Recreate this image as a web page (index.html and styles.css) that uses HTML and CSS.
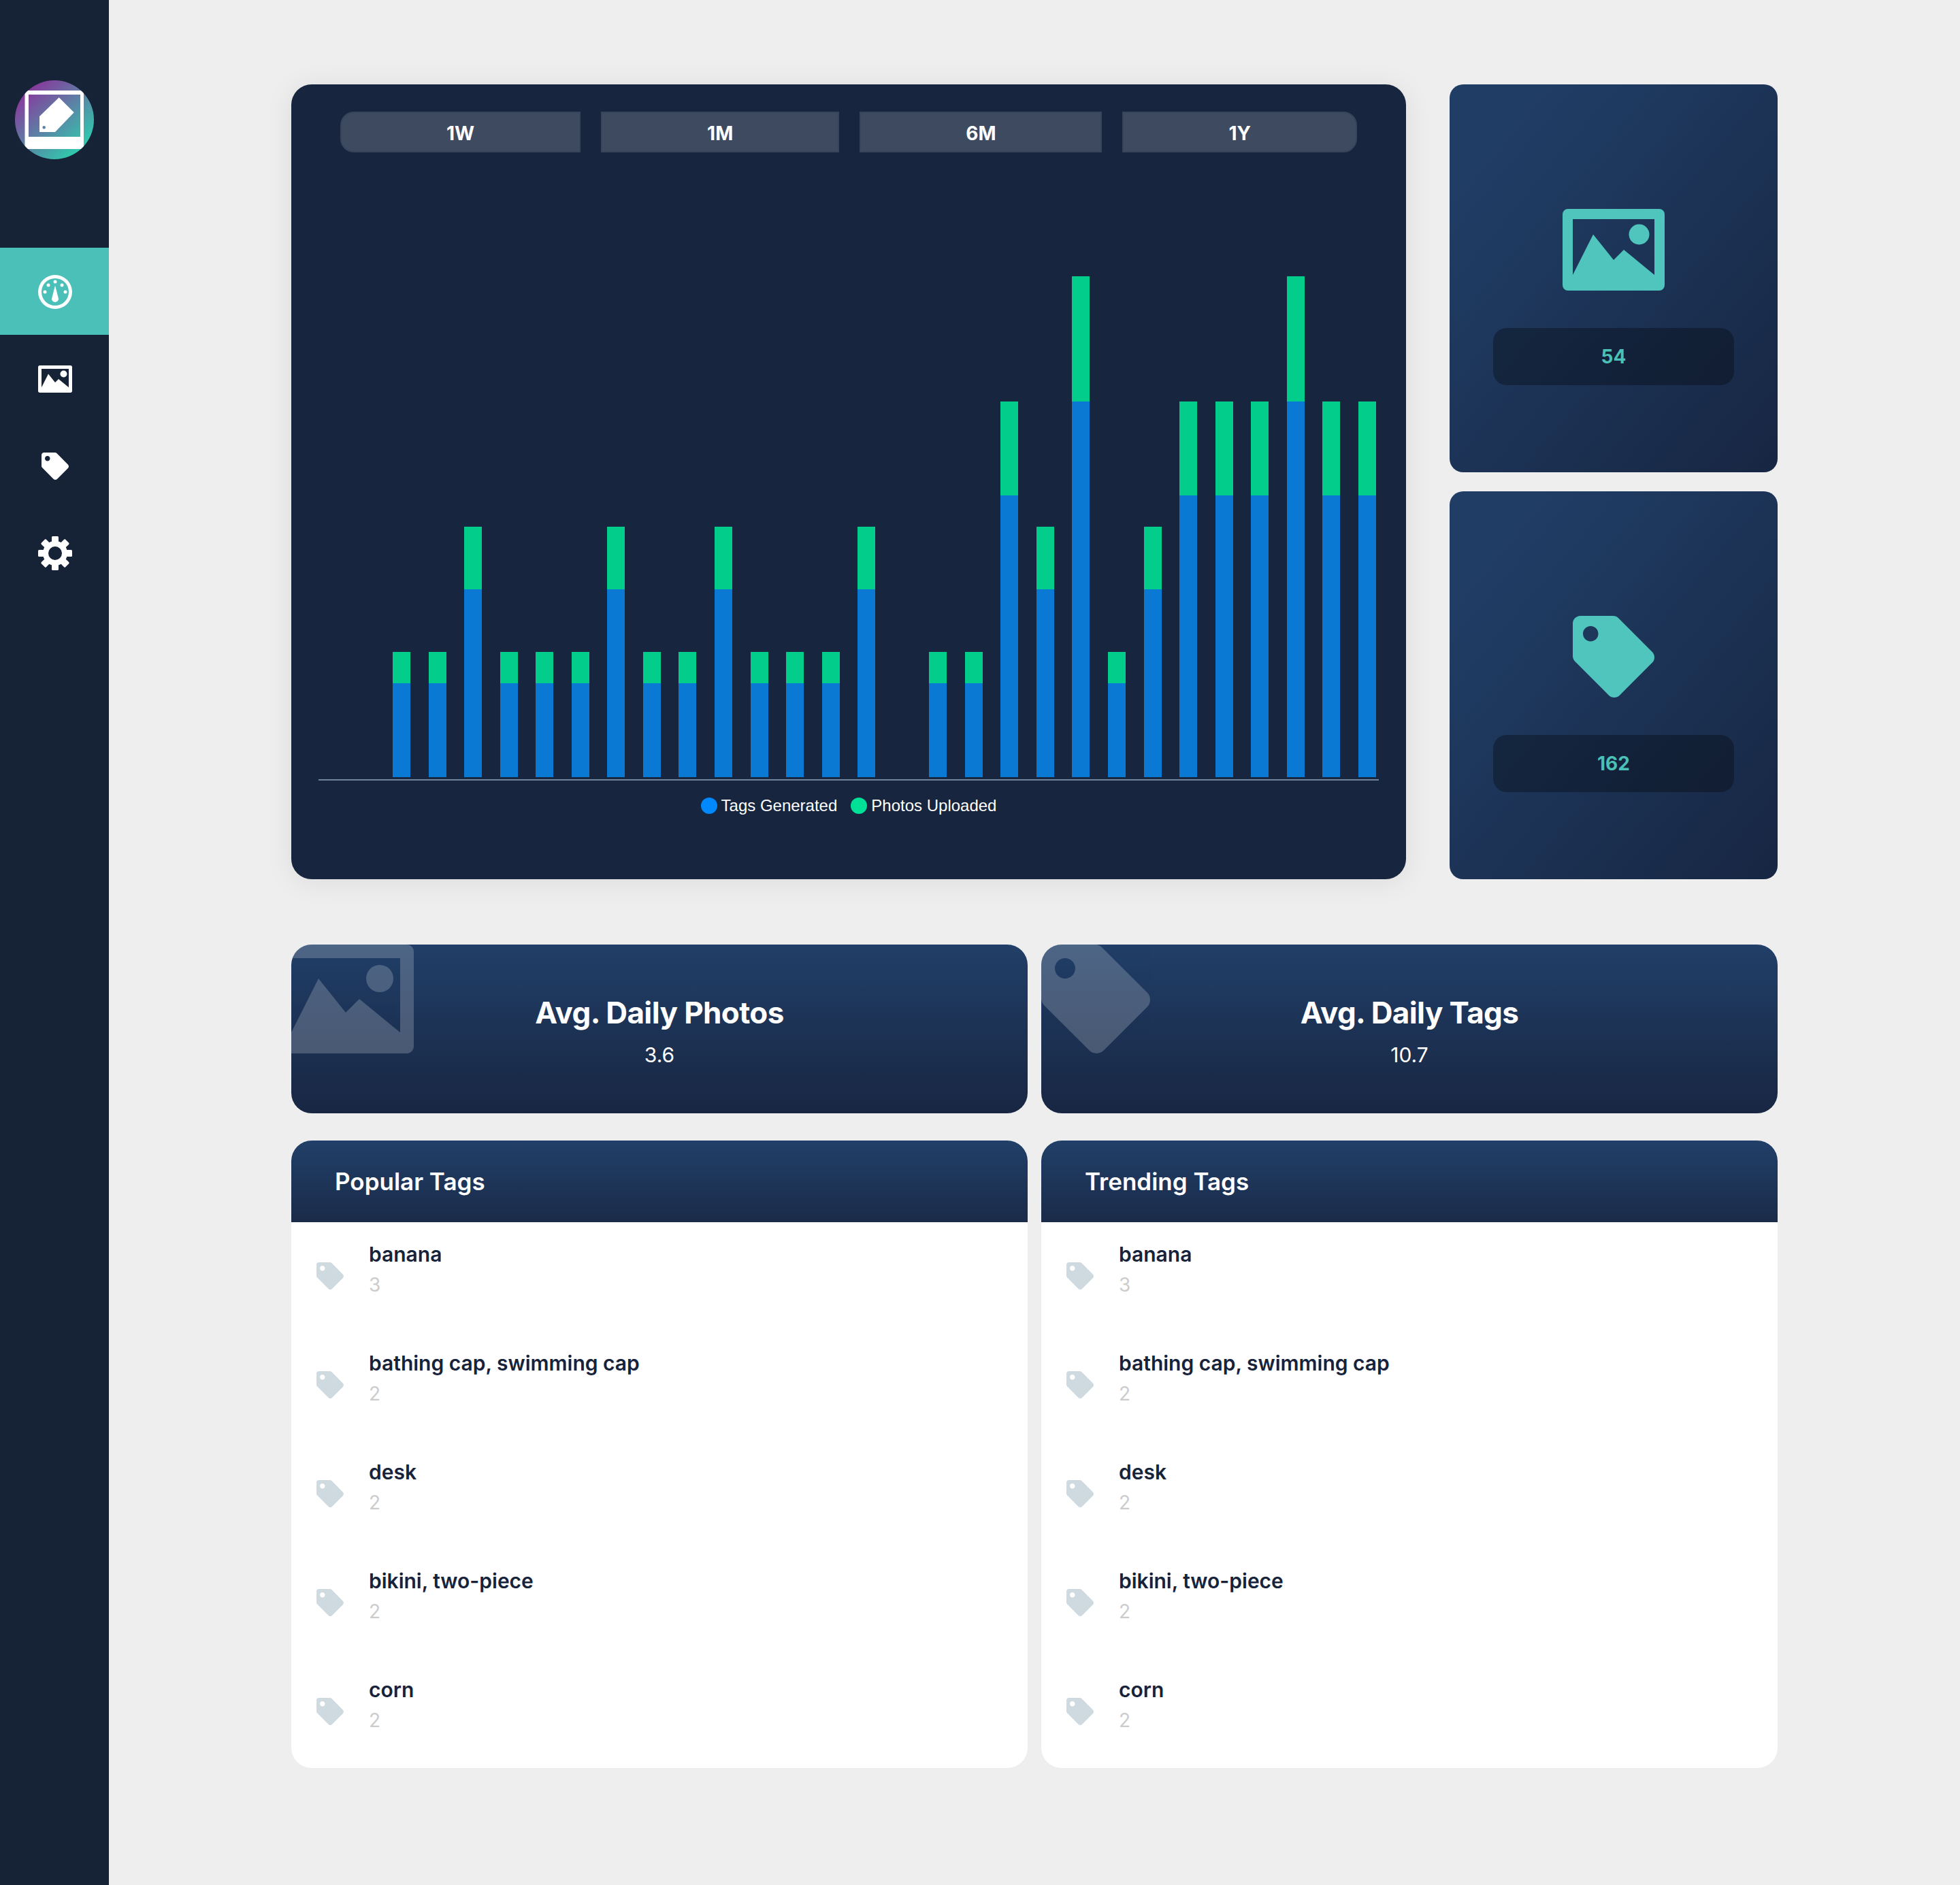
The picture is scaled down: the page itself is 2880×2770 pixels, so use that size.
FILE: index.html
```html
<!DOCTYPE html>
<html lang="en">
<head>
    <meta charset="UTF-8">
    <meta name="viewport" content="width=device-width, initial-scale=1.0">
    <title>Dashboard</title>
    <link rel="stylesheet" href="styles.css">
</head>
<body>
    <svg class="sprite" width="0" height="0" aria-hidden="true">
        <symbol id="icon-image" viewBox="0 0 150 120">
            <path fill-rule="evenodd" d="M8 0H142a8 8 0 0 1 8 8V112a8 8 0 0 1-8 8H8a8 8 0 0 1-8-8V8a8 8 0 0 1 8-8ZM15 15V97L45 37.5 75 75 90 60 135 97V15Z"/>
            <circle cx="112.5" cy="37.5" r="15"/>
        </symbol>
        <symbol id="icon-tag" viewBox="0 0 512 512">
            <path d="M0 252.118V48C0 21.49 21.49 0 48 0h204.118a48 48 0 0 1 33.941 14.059l211.882 211.882c18.745 18.745 18.745 49.137 0 67.882L293.823 497.941c-18.745 18.745-49.137 18.745-67.882 0L14.059 286.059A48 48 0 0 1 0 252.118zM112 64c-26.51 0-48 21.49-48 48s21.49 48 48 48 48-21.49 48-48-21.49-48-48-48z"/>
        </symbol>
        <symbol id="icon-gauge" viewBox="0 0 50 50">
            <path fill-rule="evenodd" d="M25 0a25 25 0 1 0 0 50a25 25 0 1 0 0-50ZM25 5a20 20 0 1 1 0 40a20 20 0 1 1 0-40Z"/>
            <circle cx="25" cy="10" r="2.5"/>
            <circle cx="15" cy="15" r="2.5"/>
            <circle cx="35" cy="15" r="2.5"/>
            <circle cx="10" cy="25" r="2.5"/>
            <circle cx="40" cy="25" r="2.5"/>
            <path d="M25 15.5L30 35a5 5 0 0 1-10 0Z"/>
        </symbol>
        <symbol id="icon-gear" viewBox="-25 -25 50 50">
            <path fill-rule="evenodd" d="M0-18a18 18 0 1 0 0 36a18 18 0 1 0 0-36ZM0-10a10 10 0 1 1 0 20a10 10 0 1 1 0-20Z"/>
            <rect x="-5" y="-25" width="10" height="10" rx="1.5"/>
            <rect x="-5" y="-25" width="10" height="10" rx="1.5" transform="rotate(45)"/>
            <rect x="-5" y="-25" width="10" height="10" rx="1.5" transform="rotate(90)"/>
            <rect x="-5" y="-25" width="10" height="10" rx="1.5" transform="rotate(135)"/>
            <rect x="-5" y="-25" width="10" height="10" rx="1.5" transform="rotate(180)"/>
            <rect x="-5" y="-25" width="10" height="10" rx="1.5" transform="rotate(225)"/>
            <rect x="-5" y="-25" width="10" height="10" rx="1.5" transform="rotate(270)"/>
            <rect x="-5" y="-25" width="10" height="10" rx="1.5" transform="rotate(315)"/>
        </symbol>
    </svg>

    <div class="app">
        <aside class="sidebar">
            <div class="logo">
                <svg width="116" height="116" viewBox="0 0 116 116">
                    <defs>
                        <linearGradient id="logo-grad" x1="0.15" y1="0.1" x2="0.85" y2="0.9">
                            <stop offset="0" stop-color="#8a359c"/>
                            <stop offset="1" stop-color="#2dcfae"/>
                        </linearGradient>
                        <clipPath id="logo-clip"><circle cx="58" cy="58" r="58"/></clipPath>
                    </defs>
                    <circle cx="58" cy="58" r="58" fill="url(#logo-grad)"/>
                    <path clip-path="url(#logo-clip)" fill="#fff" fill-rule="evenodd" d="M14.5 15H101V101H14.5ZM20 21V83H96V21Z"/>
                    <path fill="#fff" fill-rule="evenodd" d="M64.7 25.3L86.7 47.3 59 76H36V53ZM42.7 67a2.3 2.3 0 1 0 0 4.6a2.3 2.3 0 1 0 0-4.6Z"/>
                </svg>
            </div>
            <nav class="nav">
                <a class="nav-item active"><svg class="nav-icon icon-wide"><use href="#icon-gauge"/></svg></a>
                <a class="nav-item"><svg class="nav-icon icon-image"><use href="#icon-image"/></svg></a>
                <a class="nav-item"><svg class="nav-icon icon-tag"><use href="#icon-tag"/></svg></a>
                <a class="nav-item"><svg class="nav-icon icon-wide"><use href="#icon-gear"/></svg></a>
            </nav>
        </aside>

        <main class="main">
            <section class="top-row">
                <div class="chart-card">
                    <div class="range-tabs">
                        <button class="range-tab">1W</button>
                        <button class="range-tab">1M</button>
                        <button class="range-tab">6M</button>
                        <button class="range-tab">1Y</button>
                    </div>
                    <div class="plot">
                        <div class="bar"></div>
                        <div class="bar"></div>
                        <div class="bar"><div class="seg-photos" style="height:46px"></div><div class="seg-tags" style="height:138px"></div></div>
                        <div class="bar"><div class="seg-photos" style="height:46px"></div><div class="seg-tags" style="height:138px"></div></div>
                        <div class="bar"><div class="seg-photos" style="height:92px"></div><div class="seg-tags" style="height:276px"></div></div>
                        <div class="bar"><div class="seg-photos" style="height:46px"></div><div class="seg-tags" style="height:138px"></div></div>
                        <div class="bar"><div class="seg-photos" style="height:46px"></div><div class="seg-tags" style="height:138px"></div></div>
                        <div class="bar"><div class="seg-photos" style="height:46px"></div><div class="seg-tags" style="height:138px"></div></div>
                        <div class="bar"><div class="seg-photos" style="height:92px"></div><div class="seg-tags" style="height:276px"></div></div>
                        <div class="bar"><div class="seg-photos" style="height:46px"></div><div class="seg-tags" style="height:138px"></div></div>
                        <div class="bar"><div class="seg-photos" style="height:46px"></div><div class="seg-tags" style="height:138px"></div></div>
                        <div class="bar"><div class="seg-photos" style="height:92px"></div><div class="seg-tags" style="height:276px"></div></div>
                        <div class="bar"><div class="seg-photos" style="height:46px"></div><div class="seg-tags" style="height:138px"></div></div>
                        <div class="bar"><div class="seg-photos" style="height:46px"></div><div class="seg-tags" style="height:138px"></div></div>
                        <div class="bar"><div class="seg-photos" style="height:46px"></div><div class="seg-tags" style="height:138px"></div></div>
                        <div class="bar"><div class="seg-photos" style="height:92px"></div><div class="seg-tags" style="height:276px"></div></div>
                        <div class="bar"></div>
                        <div class="bar"><div class="seg-photos" style="height:46px"></div><div class="seg-tags" style="height:138px"></div></div>
                        <div class="bar"><div class="seg-photos" style="height:46px"></div><div class="seg-tags" style="height:138px"></div></div>
                        <div class="bar"><div class="seg-photos" style="height:138px"></div><div class="seg-tags" style="height:414px"></div></div>
                        <div class="bar"><div class="seg-photos" style="height:92px"></div><div class="seg-tags" style="height:276px"></div></div>
                        <div class="bar"><div class="seg-photos" style="height:184px"></div><div class="seg-tags" style="height:552px"></div></div>
                        <div class="bar"><div class="seg-photos" style="height:46px"></div><div class="seg-tags" style="height:138px"></div></div>
                        <div class="bar"><div class="seg-photos" style="height:92px"></div><div class="seg-tags" style="height:276px"></div></div>
                        <div class="bar"><div class="seg-photos" style="height:138px"></div><div class="seg-tags" style="height:414px"></div></div>
                        <div class="bar"><div class="seg-photos" style="height:138px"></div><div class="seg-tags" style="height:414px"></div></div>
                        <div class="bar"><div class="seg-photos" style="height:138px"></div><div class="seg-tags" style="height:414px"></div></div>
                        <div class="bar"><div class="seg-photos" style="height:184px"></div><div class="seg-tags" style="height:552px"></div></div>
                        <div class="bar"><div class="seg-photos" style="height:138px"></div><div class="seg-tags" style="height:414px"></div></div>
                        <div class="bar"><div class="seg-photos" style="height:138px"></div><div class="seg-tags" style="height:414px"></div></div>
                    </div>
                    <div class="legend">
                        <span class="legend-item"><span class="dot dot-tags"></span>Tags Generated</span>
                        <span class="legend-item"><span class="dot dot-photos"></span>Photos Uploaded</span>
                    </div>
                </div>

                <div class="totals">
                    <div class="total-card">
                        <svg class="total-icon icon-image"><use href="#icon-image"/></svg>
                        <div class="total-count">54</div>
                    </div>
                    <div class="total-card">
                        <svg class="total-icon icon-tag"><use href="#icon-tag"/></svg>
                        <div class="total-count">162</div>
                    </div>
                </div>
            </section>

            <section class="two-col stats">
                <div class="stat-card">
                    <svg class="watermark watermark-image"><use href="#icon-image"/></svg>
                    <h2 class="stat-title">Avg. Daily Photos</h2>
                    <div class="stat-value">3.6</div>
                </div>
                <div class="stat-card">
                    <svg class="watermark watermark-tag"><use href="#icon-tag"/></svg>
                    <h2 class="stat-title">Avg. Daily Tags</h2>
                    <div class="stat-value">10.7</div>
                </div>
            </section>

            <section class="two-col">
                <!-- popular -->
                <div class="tag-panel">
                    <h3 class="panel-header">Popular Tags</h3>
                    <ul class="tag-list">
                        <li class="tag-row"><svg class="row-icon"><use href="#icon-tag"/></svg><div class="row-text"><div class="tag-name">banana</div><div class="tag-count">3</div></div></li>
                        <li class="tag-row"><svg class="row-icon"><use href="#icon-tag"/></svg><div class="row-text"><div class="tag-name">bathing cap, swimming cap</div><div class="tag-count">2</div></div></li>
                        <li class="tag-row"><svg class="row-icon"><use href="#icon-tag"/></svg><div class="row-text"><div class="tag-name">desk</div><div class="tag-count">2</div></div></li>
                        <li class="tag-row"><svg class="row-icon"><use href="#icon-tag"/></svg><div class="row-text"><div class="tag-name">bikini, two-piece</div><div class="tag-count">2</div></div></li>
                        <li class="tag-row"><svg class="row-icon"><use href="#icon-tag"/></svg><div class="row-text"><div class="tag-name">corn</div><div class="tag-count">2</div></div></li>
                    </ul>
                </div>

                <!-- trending -->
                <div class="tag-panel">
                    <h3 class="panel-header">Trending Tags</h3>
                    <ul class="tag-list">
                        <li class="tag-row"><svg class="row-icon"><use href="#icon-tag"/></svg><div class="row-text"><div class="tag-name">banana</div><div class="tag-count">3</div></div></li>
                        <li class="tag-row"><svg class="row-icon"><use href="#icon-tag"/></svg><div class="row-text"><div class="tag-name">bathing cap, swimming cap</div><div class="tag-count">2</div></div></li>
                        <li class="tag-row"><svg class="row-icon"><use href="#icon-tag"/></svg><div class="row-text"><div class="tag-name">desk</div><div class="tag-count">2</div></div></li>
                        <li class="tag-row"><svg class="row-icon"><use href="#icon-tag"/></svg><div class="row-text"><div class="tag-name">bikini, two-piece</div><div class="tag-count">2</div></div></li>
                        <li class="tag-row"><svg class="row-icon"><use href="#icon-tag"/></svg><div class="row-text"><div class="tag-name">corn</div><div class="tag-count">2</div></div></li>
                    </ul>
                </div>
            </section>
        </main>
    </div>
</body>
</html>
```

FILE: styles.css
```css
* {
    margin: 0;
    padding: 0;
    box-sizing: border-box;
}

body {
    font-family: Inter, "Liberation Sans", sans-serif;
    background: #eeeeee;
    color: #16233a;
}

.sprite {
    position: absolute;
}

.app {
    display: flex;
    min-height: 2770px;
}

/* sidebar */
.sidebar {
    width: 160px;
    flex-shrink: 0;
    background: #162236;
}

.logo {
    display: flex;
    justify-content: center;
    padding: 118px 0 130px;
}

.logo svg {
    display: block;
}

.nav-item {
    height: 128px;
    display: flex;
    align-items: center;
    justify-content: center;
    padding: 1px 0 0 2px;
    fill: #fff;
}

.nav-item.active {
    background: #4ac0b8;
}

.icon-wide {
    width: 50px;
    height: 50px;
}

.nav-icon.icon-image {
    width: 50px;
    height: 40px;
}

.nav-icon.icon-tag {
    width: 40px;
    height: 40px;
}

/* main */
.main {
    flex: 1;
    padding: 124px 268px 0;
}

.top-row {
    display: flex;
    gap: 64px;
    height: 1168px;
}

.chart-card {
    width: 1638px;
    padding: 40px 40px 0;
    background: #17263e;
    border-radius: 30px;
    box-shadow: 0 4px 40px rgba(0, 0, 0, 0.08);
}

.range-tabs {
    display: flex;
    gap: 30px;
    padding: 0 32px;
}

.range-tab {
    flex: 1 1 auto;
    height: 60px;
    padding-top: 3px;
    font-family: Inter, sans-serif;
    font-size: 28px;
    font-weight: 700;
    color: #fff;
    background: #3e4a60;
    border: 2px solid #37445a;
}

.range-tab:first-child {
    border-radius: 20px 0 0 20px;
}

.range-tab:last-child {
    border-radius: 0 20px 20px 0;
}

.plot {
    height: 923px;
    padding: 0 4px 3px;
    display: flex;
    justify-content: space-between;
    align-items: flex-end;
    border-bottom: 2px solid #6f8396;
}

.bar {
    width: 26px;
}

.seg-tags {
    background: #0a79d4;
}

.seg-photos {
    background: #03cd8b;
}

.legend {
    display: flex;
    justify-content: center;
    gap: 20px;
    margin-top: 25px;
    font-family: "Liberation Sans", sans-serif;
    font-size: 24px;
    line-height: 24px;
    color: #fff;
}

.legend-item {
    display: flex;
    align-items: center;
    gap: 6px;
}

.dot {
    width: 24px;
    height: 24px;
    border-radius: 50%;
}

.dot-tags {
    background: #0088fe;
}

.dot-photos {
    background: #00e096;
}

.totals {
    width: 482px;
    display: flex;
    flex-direction: column;
    gap: 28px;
}

.total-card {
    height: 570px;
    padding-top: 183px;
    display: flex;
    flex-direction: column;
    align-items: center;
    gap: 55px;
    background: linear-gradient(130deg, #203d65 15%, #172642 100%);
    border-radius: 20px;
    fill: #50c5bd;
}

.total-icon.icon-image {
    width: 150px;
    height: 120px;
}

.total-icon.icon-tag {
    width: 120px;
    height: 120px;
}

.total-count {
    width: 354px;
    height: 84px;
    display: flex;
    align-items: center;
    justify-content: center;
    font-size: 28px;
    font-weight: 700;
    color: #4ac0b8;
    background: rgba(0, 0, 0, 0.3);
    border-radius: 20px;
}

.two-col {
    display: flex;
    gap: 20px;
    margin-top: 40px;
}

.stats {
    margin-top: 96px;
}

.stat-card {
    flex: 1;
    height: 248px;
    padding-top: 70px;
    position: relative;
    overflow: hidden;
    text-align: center;
    color: #fff;
    background: linear-gradient(180deg, #213f68 0%, #182642 100%);
    border-radius: 30px;
}

.watermark {
    position: absolute;
    top: 0;
    left: 0;
    height: 160px;
    fill: #fff;
    opacity: 0.2;
}

.watermark-image {
    left: -20px;
    width: 200px;
}

.watermark-tag {
    width: 160px;
}

.stat-title {
    font-size: 44px;
    line-height: 60px;
    font-weight: 700;
    letter-spacing: -0.6px;
}

.stat-value {
    margin-top: 14px;
    font-size: 30px;
    line-height: 36px;
}

.tag-panel {
    flex: 1;
    height: 922px;
    background: #fff;
    border-radius: 30px;
    overflow: hidden;
}

.panel-header {
    height: 120px;
    padding: 28px 64px 0;
    font-size: 35px;
    line-height: 64px;
    font-weight: 600;
    color: #fff;
    background: linear-gradient(180deg, #213f68 0%, #1a2b49 100%);
}

.tag-list {
    list-style: none;
}

.tag-row {
    height: 160px;
    padding: 0 0 2px 37px;
    display: flex;
    align-items: center;
    gap: 37px;
}

.row-icon {
    width: 40px;
    height: 40px;
    flex-shrink: 0;
    fill: #ced9e0;
}

.row-text {
    align-self: flex-start;
    padding-top: 25px;
}

.tag-name {
    font-size: 30px;
    line-height: 44px;
    font-weight: 600;
    color: #16233a;
}

.tag-count {
    font-size: 28px;
    line-height: 47px;
    color: #cccccc;
}
```
